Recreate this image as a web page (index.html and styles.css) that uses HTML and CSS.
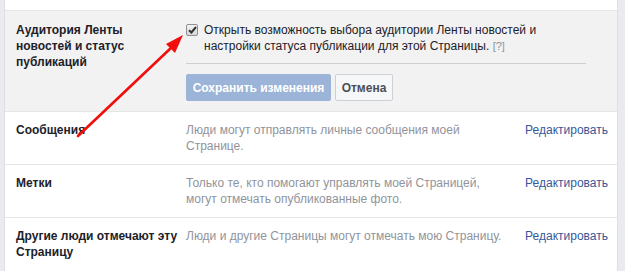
FILE: index.html
```html
<!DOCTYPE html>
<html lang="ru">
 <head>
	<title>Настройки Страницы</title>
	<meta charset="utf-8"/>
	<link rel="stylesheet" href="styles.css">
 </head>
 <body>
	<div id="wrap">
		<div id="settings">
			<div class="prev"></div>

			<!-- открытая строка с настройкой -->
			<div class="row open">
				<h4 class="label">Аудитория Ленты новостей и статус публикаций</h4>
				<div class="edit">
					<label class="check">
						<span class="box">
							<svg width="9" height="8" viewBox="0 0 9 8"><path d="M1 4.2 L3.4 6.5 L8 1" fill="none" stroke="#333" stroke-width="2"/></svg>
						</span>
						<span class="check_text">Открыть возможность выбора аудитории Ленты новостей и настройки статуса публикации для этой Страницы. <a href="#" class="help">[?]</a></span>
					</label>
					<div class="btns">
						<button class="save" type="button">Сохранить изменения</button>
						<button class="cancel" type="button">Отмена</button>
					</div>
				</div>
			</div>

			<div class="row">
				<h4 class="label">Сообщения</h4>
				<p class="desc">Люди могут отправлять личные сообщения моей Странице.</p>
				<a href="#" class="link">Редактировать</a>
			</div>
			<div class="row">
				<h4 class="label">Метки</h4>
				<p class="desc">Только те, кто помогают управлять моей Страницей, могут отмечать опубликованные фото.</p>
				<a href="#" class="link">Редактировать</a>
			</div>
			<div class="row">
				<h4 class="label">Другие люди отмечают эту Страницу</h4>
				<p class="desc">Люди и другие Страницы могут отмечать мою Страницу.</p>
				<a href="#" class="link">Редактировать</a>
			</div>
		</div>

		<!-- красная стрелка поверх страницы -->
		<svg class="arrow" width="625" height="271" viewBox="0 0 625 271">
			<line x1="78" y1="136" x2="172" y2="47" stroke="#f20d0d" stroke-width="2.6" stroke-linecap="round"/>
			<polygon points="183,35 166,44 175,53" fill="#f20d0d"/>
		</svg>
	</div>
 </body>
</html>
```

FILE: styles.css
```css
*{margin:0; padding:0; box-sizing:border-box;}
body{background-color:#e9ebee; font-family:"Liberation Sans", Arial, sans-serif; font-size:12px; color:#1d2129;}
a:link,a:visited{text-decoration:none; color:#365899;}

/*######## wrap ########*/
#wrap{width:625px; height:271px; overflow:hidden; position:relative;}
#settings{width:614px; margin-left:4px; background-color:#fff; border-right:1px solid #dddfe2; border-left:1px solid #dddfe2; min-height:271px;}
#settings .prev{height:10px;}

/*######## row ########*/
.row{display:grid; grid-template-columns:165px 320px 1fr; column-gap:5px; padding:10px 0 10px 11px; border-top:1px solid #e5e5e5; line-height:16px;}
.row .label{font-weight:bold; font-size:12px;}
.row .desc{color:#90949c;}
.row .link{justify-self:end; margin-right:9px;}

/*######## open row ########*/
.row.open{grid-template-columns:165px 1fr; background-color:#f2f2f2; padding-top:11px; padding-bottom:10px;}
.edit{width:400px;}
.check{display:flex; gap:6px; padding-bottom:9px; border-bottom:1px solid #ccd0d5;}
.check .box{flex:none; width:12px; height:12px; margin-top:2px; border:1px solid #8f8f8f; border-radius:2px; background:linear-gradient(#f4f4f4, #d8d8d8); display:flex; align-items:center; justify-content:center;}
.check_text{width:380px;}
.check .help{color:#90949c; font-size:11px;}

.btns{display:flex; gap:4px; margin-top:10px;}
.btns button{height:27px; font-family:inherit; font-size:12px; font-weight:bold; border-radius:2px; border:1px solid; cursor:pointer;}
.btns .save{width:145px; background-color:#9cb4d8; border-color:#9cb4d8; color:#fff;}
.btns .cancel{width:58px; background-color:#f6f7f9; border-color:#ced0d4; color:#4b4f56;}

/*######## arrow ########*/
.arrow{position:absolute; left:0; top:0; pointer-events:none;}
```
